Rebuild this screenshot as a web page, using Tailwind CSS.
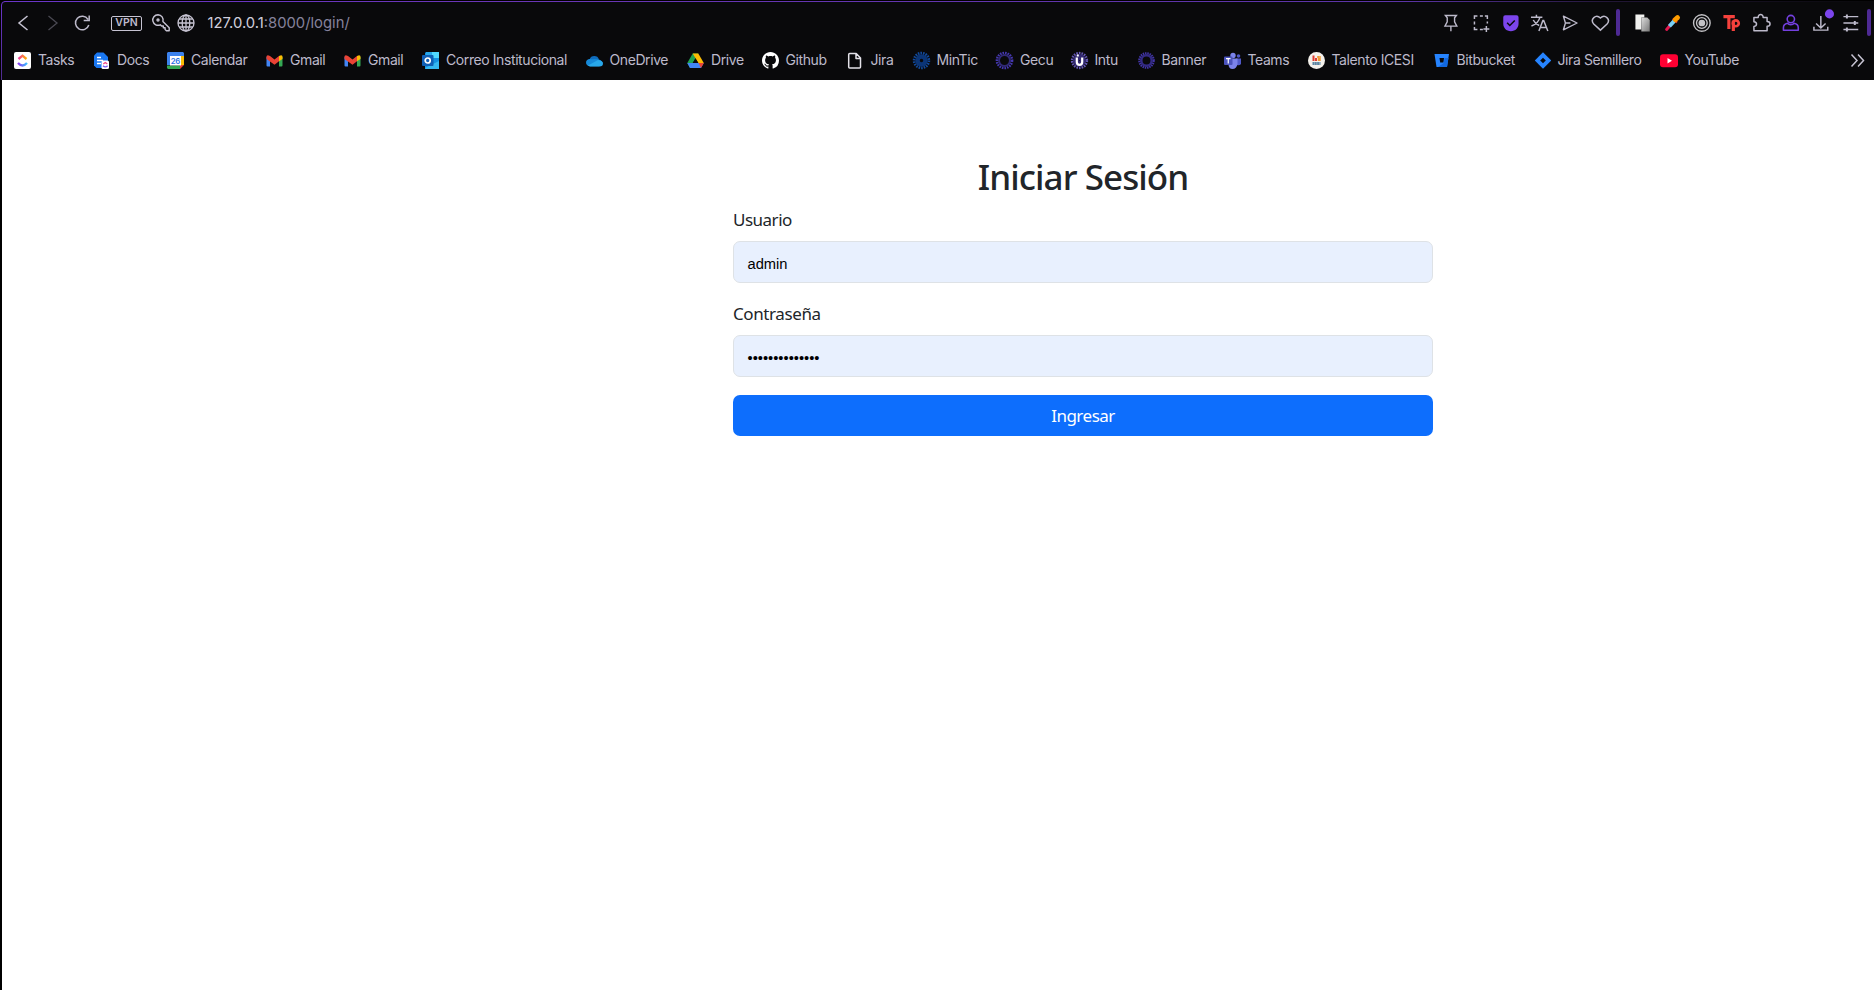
<!DOCTYPE html>
<html lang="es">
<head>
<meta charset="utf-8">
<title>Iniciar Sesión</title>
<script src="https://cdn.jsdelivr.net/npm/@tailwindcss/browser@4"></script>
</head>
<body class="w-[1874px] h-[990px] overflow-hidden bg-black flex flex-col">
<header class="relative h-20 shrink-0 bg-[#09090b] font-['Inter',sans-serif] text-[#bdbacb]">
  <svg class="absolute inset-0" width="1874" height="80" fill="none"><defs><linearGradient id="edge" gradientUnits="userSpaceOnUse" x1="0" y1="0" x2="1874" y2="0"><stop stop-color="#6a35c9"/><stop offset=".25" stop-color="#6a35b8"/><stop offset=".75" stop-color="#5b34a6"/><stop offset=".86" stop-color="#211635"/><stop offset="1" stop-color="#09090b"/></linearGradient><linearGradient id="side" x1="0" y1="0" x2="0" y2="1"><stop stop-color="#6a35c9"/><stop offset="1" stop-color="#4e2b8e"/></linearGradient></defs><path d="M0 0h1874v1.200H5Q1.200 1.200 1.200 5V80H0z" fill="#000"/><path d="M4.500 1.500H1874" stroke="url(#edge)"/><path d="M5 1.500Q1.500 1.500 1.500 5V80" stroke="url(#side)"/></svg>

  <div class="relative flex items-center h-[46px] pl-[8px]">
    <svg class="w-[30px] h-[30px]" viewBox="0 0 30 30" fill="none" stroke="#c6c3d2" stroke-width="1.500"><path d="M19.500 8 11 15l8.500 7"/></svg>
    <svg class="w-[30px] h-[30px]" viewBox="0 0 30 30" fill="none" stroke="#4a4953" stroke-width="1.300"><path d="m10.500 8 8.500 7-8.500 7"/></svg>
    <svg class="w-[30px] h-[30px]" viewBox="0 0 30 30" fill="none" stroke="#bdbacb" stroke-width="1.500"><path d="M20 11.300A6.800 6.800 0 1 0 20.800 17M21.200 7.500v5h-5.500"/></svg>
    <div class="ml-[13px] w-[31px] h-[15px] border border-[#c6c3d2] rounded-[2px] flex items-center justify-center text-[10.5px] leading-none font-semibold">VPN</div>
    <svg class="ml-[9px] w-[20px] h-[20px]" viewBox="0 0 20 20" fill="none" stroke="#c6c3d2" stroke-width="1.400" stroke-linejoin="round"><path d="M7 1.700a5.300 5.300 0 1 0 2.300 10.100l1.200 1.200h1.800v1.800h1.800v1.700l1.300 1.200h2.800v-2.900l-6.300-6.300A5.300 5.300 0 0 0 7 1.700Z"/><circle cx="7" cy="7" r="1"/></svg>
    <svg class="ml-[6px] w-[18px] h-[18px]" viewBox="0 0 18 18" fill="none" stroke="#c6c3d2" stroke-width="1.300"><circle cx="9" cy="9" r="8"/><ellipse cx="9" cy="9" rx="3.800" ry="8"/><path d="M9 1v16M1 9h16M2.200 5h13.600M2.200 13h13.600"/></svg>
    <div class="ml-[12.500px] text-[14.800px] leading-none whitespace-nowrap text-[#85829c]"><span class="text-[#d0cddb]">127.0.0.1</span>:8000/login/</div>

    <div class="absolute left-[1436px] top-0 h-[46px] flex items-center">
      <svg class="w-[29.8px] h-[20px]" viewBox="0 0 30 20" fill="none" stroke="#bdbacb" stroke-width="1.400"><path d="M9.500 2.500h11l-1.800 2.200v4L21 13.200H9L11.300 8.700v-4ZM15 13.200v5"/></svg>
      <svg class="w-[29.8px] h-[20px]" viewBox="0 0 30 20" fill="none" stroke="#bdbacb" stroke-width="1.500"><path d="M8.500 6V3h3M14 3h3M19 3h2.500v3M8.500 8.500v3M21.500 8.500v2M8.500 14v2.500h3M14 16.500h3M20.500 13v6M17.500 16h6"/></svg>
      <svg class="w-[29.8px] h-[20px]" viewBox="0 0 30 20" fill="none"><path d="M9.300 2.200h11.400q2 0 2 2v6.500c0 4-3 7.500-7.700 7.500s-7.700-3.500-7.700-7.500V4.200q0-2 2-2Z" fill="#7c45ec"/><path d="m11.200 9.700 2.700 2.800 5-5" stroke="#09090b" stroke-width="1.500"/></svg>
      <svg class="w-[29.8px] h-[20px]" viewBox="0 0 30 20" fill="none" stroke="#bdbacb" stroke-width="1.500"><path d="M6 4.300h11.500M11.500 1.800v2.500M15 4.300c-1 4-4 7-8.500 8.700M8.300 7c1.500 3 3.500 4.500 6 5.500M14 18l4-10.500h.8L23 18M15.300 14.500h6.200"/></svg>
      <svg class="w-[29.8px] h-[20px]" viewBox="0 0 30 20" fill="none" stroke="#bdbacb" stroke-width="1.400" stroke-linejoin="round"><path d="M8.500 3.200 22.200 10 8.500 16.800l2-6.800ZM10.500 10h5"/></svg>
      <svg class="w-[29.8px] h-[20px]" viewBox="0 0 30 20" fill="none" stroke="#bdbacb" stroke-width="1.500"><path d="M15.500 17.200 8.800 11C4.800 6.500 10.900.3 15.500 5c4.600-4.700 10.700 1.500 6.700 6Z"/></svg>
    </div>
    <div class="absolute left-[1616px] top-[9px] w-[4px] h-[27px] rounded-full bg-[#4e2a94]"></div>
    <div class="absolute left-[1628px] top-0 h-[46px] flex items-center">
      <svg class="w-[29.7px] h-[20px]" viewBox="0 0 30 20"><defs><linearGradient id="pg" x2="1" y2="1"><stop stop-color="#ddd"/><stop offset="1" stop-color="#777"/></linearGradient></defs><path d="M7.500 1.500h9v3h-3v12h-6z" fill="#f1f1ef"/><path d="M13.500 4.500h6l2.500 2.500v11.500h-8.500z" fill="url(#pg)"/></svg>
      <svg class="w-[29.7px] h-[20px]" viewBox="0 0 30 20" fill="none"><path d="m8.700 16.500 3.500-4" stroke="#e3174f" stroke-width="3" stroke-linecap="round"/><path d="m11.500 13.300 5-5.500" stroke="#7ad0f5" stroke-width="4"/><path d="m15 5.500 4.200 4" stroke="#f04820" stroke-width="2.300"/><path d="m17.500 6.500 2.200-2" stroke="#ff9d00" stroke-width="5" stroke-linecap="round"/></svg>
      <svg class="w-[29.7px] h-[20px]" viewBox="0 0 30 20" fill="none" stroke="#c3c2c6" stroke-width="1.400"><circle cx="15" cy="10" r="8.400"/><circle cx="15" cy="10" r="5.400"/><circle cx="15" cy="10" r="2.700" fill="#c3c2c6"/></svg>
      <svg class="w-[29.7px] h-[20px]" viewBox="0 0 30 20" fill="none" stroke="#f5413c" stroke-width="3.200"><path d="M6.500 3.500h11.500M12 3.500V16M16.500 18V7.500"/><circle cx="19" cy="10.300" r="3" stroke-width="2.700"/></svg>
      <svg class="w-[29.7px] h-[20px]" viewBox="0 0 30 20" fill="none" stroke="#bdbacb" stroke-width="1.500" stroke-linejoin="round"><path d="M7 4.500h4.300c-.2-4 5.200-4 5 0h4v4c4 .2 4 4.600 0 4.800v4.500H7v-4.300c3.500-.2 3.500-4.600 0-4.800Z"/></svg>
      <svg class="w-[29.7px] h-[20px]" viewBox="0 0 30 20" fill="none" stroke="#7440df" stroke-width="1.600"><circle cx="15" cy="6" r="3.700"/><path d="M11.700 10.300c-3 .6-4.200 2-4.200 4.500v2.500h15v-2.500c0-2.500-1.200-3.900-4.200-4.500-1.500 2-5.100 2-6.600 0Z" stroke-linejoin="round"/></svg>
      <svg class="w-[29.7px] h-[30px]" viewBox="0 0 30 30" fill="none" stroke="#bdbacb" stroke-width="1.500"><path d="M15 8v12M10.200 15.500 15 20l4.800-4.500M8 18.800v3.400h14v-3.400"/><circle cx="23.700" cy="5.800" r="4.600" fill="#7c45ec" stroke="none"/></svg>
      <svg class="w-[29.7px] h-[20px]" viewBox="0 0 30 20" fill="none" stroke="#bdbacb" stroke-width="1.400"><path d="M7.500 3.500h15M7.500 10h15M7.500 16.500h15"/><path d="M11 1.500v4M19 8v4M11 14.500v4" stroke-width="2"/></svg>
    </div>
    <div class="absolute left-[1867px] top-[9px] w-[4px] h-[27px] rounded-full bg-[#4e2a94]"></div>
  </div>

  <nav class="relative flex items-center h-[28px] pl-[14px] text-[14px] leading-none tracking-[-0.41px] whitespace-nowrap">
    <a class="flex items-center gap-[7px] w-[79px]"><svg class="w-[17px] h-[17px] shrink-0" viewBox="0 0 17 17" fill="none" stroke-width="2.300"><defs><linearGradient id="cu1"><stop stop-color="#f0369c"/><stop offset="1" stop-color="#ffb000"/></linearGradient><linearGradient id="cu2"><stop stop-color="#8b35f0"/><stop offset="1" stop-color="#3ac0ff"/></linearGradient></defs><rect width="17" height="17" rx="2" fill="#fff"/><path d="m4.500 7 4-3.300 4 3.300" stroke="url(#cu1)"/><path d="M4 11q4.500 5 9 0" stroke="url(#cu2)"/></svg>Tasks</a>
    <a class="flex items-center gap-[7px] w-[74px]"><svg class="w-[17px] h-[17px] shrink-0" viewBox="0 0 17 17" fill="none"><path d="M4 .5h6.500L15 5v11H3.500L1 13.500V3.500z" fill="#1977f2"/><path d="M4 5.500h4M4 8.500h6M4 11.500h4" stroke="#fff" stroke-width="1.700"/><rect x="8.500" y="8.500" width="7.500" height="8.500" rx="1.500" fill="#fff"/><path d="m10.300 12 2-1.500 2 1.500" stroke="#f34a88" stroke-width="1.300"/><path d="M10 13.700q2.300 2.500 4.600 0" stroke="#7957f3" stroke-width="1.300"/></svg>Docs</a>
    <a class="flex items-center gap-[7px] w-[99px]"><svg class="w-[17px] h-[17px] shrink-0" viewBox="0 0 17 17"><path d="M1 0h15l1 1v12H0V1z" fill="#3c82ee"/><path d="M13 4h4v9h-4z" fill="#fbbc04"/><path d="M0 13.500h13V17H1l-1-1z" fill="#34a853"/><path d="M13 13h4l-4 4z" fill="#ea4335"/><path d="M3 4h11v9.500H3z" fill="#fff"/><text x="8.300" y="11.700" text-anchor="middle" font-size="7.800" font-weight="600" fill="#2b72e6">26</text></svg>Calendar</a>
    <a class="flex items-center gap-[7px] w-[78px]"><svg class="w-[17px] h-[17px] shrink-0" viewBox="0 0 17 17"><path d="M.5 4.500 4 7v7.500H1.500q-1 0-1-1z" fill="#4285f4"/><path d="M16.500 4.500 13 7v7.500h2.500q1 0 1-1z" fill="#34a853"/><path d="M13 4q3.500-2 3.500 1v2L13 9.300z" fill="#fbbc04"/><path d="M.5 5q0-3 3.500-1l4.500 3.500L13 4v5.300l-4.500 3.400L.5 7z" fill="#ea4335"/></svg>Gmail</a>
    <a class="flex items-center gap-[7px] w-[78px]"><svg class="w-[17px] h-[17px] shrink-0" viewBox="0 0 17 17"><path d="M.5 4.500 4 7v7.500H1.500q-1 0-1-1z" fill="#4285f4"/><path d="M16.500 4.500 13 7v7.500h2.500q1 0 1-1z" fill="#34a853"/><path d="M13 4q3.500-2 3.500 1v2L13 9.300z" fill="#fbbc04"/><path d="M.5 5q0-3 3.500-1l4.500 3.500L13 4v5.300l-4.500 3.400L.5 7z" fill="#ea4335"/></svg>Gmail</a>
    <a class="flex items-center gap-[7px] w-[163.500px]"><svg class="w-[17px] h-[17px] shrink-0" viewBox="0 0 17 17"><path d="M4 0h13v17H3V1z" fill="#1490df"/><path d="M10 0h7v6h-7z" fill="#50d9ff"/><path d="M4 0h6v6H4z" fill="#28a8ea"/><path d="m3 16 14-7v8H4z" fill="#35b8f1"/><rect y="3" width="11.500" height="11" rx="1" fill="#0f5fb5"/><circle cx="5.700" cy="8.500" r="2.500" fill="none" stroke="#fff" stroke-width="1.700"/></svg>Correo Institucional</a>
    <a class="flex items-center gap-[7px] w-[101.500px]"><svg class="w-[17px] h-[17px] shrink-0" viewBox="0 0 17 17"><path d="M3.500 7.500a5 5 0 0 1 9.500 0L8 12H2Q-1.500 8 3.500 7.500" fill="#0f6cbd"/><path d="M6 7.300q8-1 10.500 3-1 4-4 4H4Q.5 14 0 11q0-3.500 3.500-4z" fill="#1689d8"/><path d="M2 13.500 12 8q5 .5 5 3.500t-3.500 3H4z" fill="#28a8ea"/></svg>OneDrive</a>
    <a class="flex items-center gap-[7px] w-[74.500px]"><svg class="w-[17px] h-[17px] shrink-0" viewBox="0 0 17 17"><path d="M5.700 1.500h5.600L3 16 .3 11z" fill="#20a350"/><path d="M5.700 1.500h5.600l5.500 9.500h-5.500z" fill="#fbbc04"/><path d="M.3 11h16.500L14 16H3z" fill="#4285f4"/><path d="m11.500 11 5.300 0L14 16z" fill="#ea4335"/><path d="m8.500 6.300 2.800 4.700H5.700z" fill="#09090b"/></svg>Drive</a>
    <a class="flex items-center gap-[7px] w-[85px]"><svg class="w-[17px] h-[17px] shrink-0" viewBox="0 0 16 16" fill="#fff"><path d="M8 0C3.580 0 0 3.580 0 8c0 3.540 2.290 6.530 5.470 7.590.4.070.55-.17.55-.38 0-.19-.01-.82-.01-1.490-2.010.37-2.530-.49-2.690-.94-.09-.23-.48-.94-.82-1.130-.28-.15-.68-.52-.01-.53.63-.01 1.080.58 1.230.82.72 1.210 1.870.87 2.330.66.070-.52.28-.87.51-1.070-1.780-.2-3.640-.89-3.640-3.950 0-.87.31-1.590.82-2.150-.08-.2-.36-1.020.08-2.120 0 0 .67-.21 2.200.82.64-.18 1.320-.27 2-.27s1.360.09 2 .27c1.530-1.040 2.200-.82 2.200-.82.44 1.100.16 1.920.08 2.120.51.560.82 1.270.82 2.150 0 3.070-1.870 3.750-3.650 3.950.29.25.54.73.54 1.480 0 1.070-.01 1.930-.01 2.200 0 .21.15.46.55.38A8.010 8.010 0 0 0 16 8c0-4.420-3.580-8-8-8"/></svg>Github</a>
    <a class="flex items-center gap-[7px] w-[66px]"><svg class="w-[17px] h-[17px] shrink-0" viewBox="0 0 17 17" fill="none" stroke="#e4e2e9" stroke-width="1.500" stroke-linejoin="round"><path d="M1.700 2.500q0-1 1-1h6.500L13.500 6v9q0 1-1 1H2.700q-1 0-1-1ZM9 2v4.500h4.500"/></svg>Jira</a>
    <a class="flex items-center gap-[7px] w-[83.500px]"><svg class="w-[17px] h-[17px] shrink-0 overflow-visible" viewBox="0 0 17 17" fill="none" stroke="#124a9c"><circle cx="8.500" cy="8.500" r="7.400" stroke-width="2.700" stroke-dasharray="1.600 .98"/><circle cx="8.500" cy="8.500" r="4" stroke-width="4.500" stroke="#0b3577"/></svg>MinTic</a>
    <a class="flex items-center gap-[7px] w-[74.500px]"><svg class="w-[17px] h-[17px] shrink-0 overflow-visible" viewBox="0 0 17 17" fill="none" stroke="#4538b0"><circle cx="8.500" cy="8.500" r="7.600" stroke-width="2.500" stroke-dasharray="1.600 .98"/><circle cx="8.500" cy="8.500" r="5.500" stroke-width="2" stroke="#302974"/></svg>Gecu</a>
    <a class="flex items-center gap-[7px] w-[67px]"><svg class="w-[17px] h-[17px] shrink-0 overflow-visible" viewBox="0 0 17 17" fill="none" stroke="#6558b4"><circle cx="8.500" cy="8.500" r="7.300" stroke-width="2.700" stroke-dasharray="1.600 .98"/><circle cx="8.500" cy="8.500" r="3.500" stroke-width="6" stroke="#332a72"/><path d="M5.800 5.500V10q0 2.800 2.700 2.800t2.700-2.800V5.500M5.800 3.500h2" stroke="#fff" stroke-width="2.200"/></svg>Intu</a>
    <a class="flex items-center gap-[7px] w-[86px]"><svg class="w-[17px] h-[17px] shrink-0" viewBox="0 0 17 17" fill="none" stroke="#4336a8"><circle cx="8.500" cy="8.500" r="7.200" stroke-width="2.200" stroke-dasharray="1.500 .8"/><circle cx="8.500" cy="8.500" r="5.200" stroke-width="2.500" stroke="#332a84"/></svg>Banner</a>
    <a class="flex items-center gap-[7px] w-[84px]"><svg class="w-[17px] h-[17px] shrink-0" viewBox="0 0 17 17"><circle cx="9" cy="3.500" r="2.700" fill="#7b83eb"/><circle cx="14.500" cy="4" r="1.800" fill="#5059c9"/><path d="M12 6.500h5V12q-1.500 2-4 1z" fill="#5059c9"/><path d="M5 6.500h8.500V12q-1 5-5 5-4 0-4-5z" fill="#7b83eb"/><rect y="4.500" width="8.500" height="8.500" rx="1" fill="#4b53bc"/><path d="M2 6.700h4.500M4.250 6.700V11.500" stroke="#fff" stroke-width="1.200"/></svg>Teams</a>
    <a class="flex items-center gap-[7px] w-[125px]"><svg class="w-[17px] h-[17px] shrink-0" viewBox="0 0 17 17"><circle cx="8.500" cy="8.500" r="8.500" fill="#f4f1ec"/><path d="M5.500 3.500v5.500M8 6v3" stroke="#e03c31" stroke-width="2"/><path d="M10.500 4v5M9 5h4M12 6v3" stroke="#f09a36" stroke-width="1.500"/><path d="M4.500 11.500h8" stroke="#5e86a3" stroke-width="3" stroke-dasharray="2 .3"/></svg>Talento ICESI</a>
    <a class="flex items-center gap-[7px] w-[101px]"><svg class="w-[17px] h-[17px] shrink-0" viewBox="0 0 17 17"><path d="M1.500 2h14.500l-2 13H3.500z" fill="#2684ff"/><path d="M15.500 6h-4l-.7 5L5 15h9z" fill="#1268df"/><path d="M6.500 6h4.500l-.6 4.500H7.200z" fill="#09090b"/></svg>Bitbucket</a>
    <a class="flex items-center gap-[7px] w-[127px]"><svg class="w-[17px] h-[17px] shrink-0" viewBox="0 0 17 17"><path d="M9 .3 17.200 8.500 9 16.700.8 8.500Z" fill="#2684ff"/><path d="M9 5.700 11.800 8.500 9 11.300 6.200 8.500Z" fill="#09090b"/></svg>Jira Semillero</a>
    <a class="flex items-center gap-[7px]"><svg class="w-[17px] h-[17px] shrink-0 overflow-visible" viewBox="0 0 17 17"><rect x="-1" y="2.300" width="18" height="13" rx="3" fill="#ff0033"/><path d="M6.500 6v5.500l4.500-2.700z" fill="#fff"/></svg>YouTube</a>
    <svg class="absolute left-[1850px] top-[7px] w-[16px] h-[15px]" viewBox="0 0 16 15" fill="none" stroke="#c6c3d2" stroke-width="1.500"><path d="m1.500 1.500 5.500 6-5.500 6M8 1.500l5.500 6-5.500 6"/></svg>
  </nav>
</header>

<main class="ml-[2px] flex-1 bg-white pt-[76px] text-[#212529] font-['Noto_Sans',sans-serif]">
  <form class="ml-[731px] w-[700px] flex flex-col">
    <h2 class="h-[42px] mb-[9px] text-center text-[35px] leading-[42px] tracking-[-0.93px] font-medium whitespace-nowrap">Iniciar Sesión</h2>
    <label class="h-[26px] mb-[8px] text-[17px] leading-[26px] tracking-[-0.5px]">Usuario</label>
    <div class="h-[42px] mb-[18px] px-[13.500px] border border-[#dee2e6] rounded-[7px] bg-[#e8f0fe] flex items-center text-[14.700px] text-black font-['Liberation_Sans',sans-serif]"><span class="pt-[4px]">admin</span></div>
    <label class="h-[26px] mb-[8px] text-[17px] leading-[26px] tracking-[-0.4px]">Contraseña</label>
    <div class="h-[42px] mb-[18px] px-[13.500px] border border-[#dee2e6] rounded-[7px] bg-[#e8f0fe] flex items-center text-[14.700px] text-black font-['Liberation_Sans',sans-serif]"><span class="pt-[4px]">••••••••••••••</span></div>
    <button type="button" class="h-[41px] rounded-[7px] bg-[#0d6efd] text-white text-[17px] leading-none tracking-[-0.5px]">Ingresar</button>
  </form>
</main>
</body>
</html>
